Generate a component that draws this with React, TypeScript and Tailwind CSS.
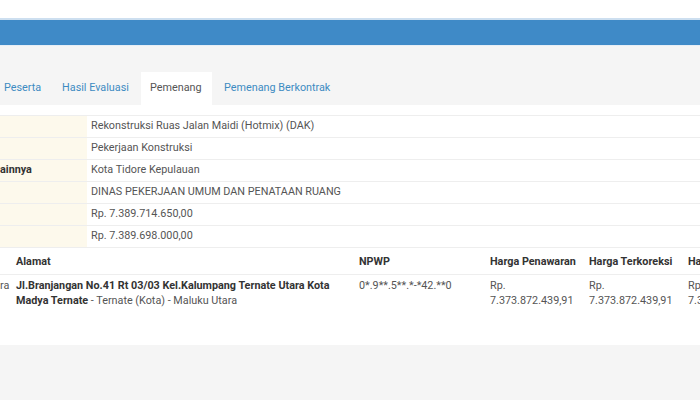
import React from "react";

const infoRows: { label: string; value: string }[] = [
  { label: "", value: "Rekonstruksi Ruas Jalan Maidi (Hotmix) (DAK)" },
  { label: "", value: "Pekerjaan Konstruksi" },
  { label: "ainnya", value: "Kota Tidore Kepulauan" },
  { label: "", value: "DINAS PEKERJAAN UMUM DAN PENATAAN RUANG" },
  { label: "", value: "Rp. 7.389.714.650,00" },
  { label: "", value: "Rp. 7.389.698.000,00" },
];

export default function App() {
  return (
    <div
      className="w-[700px] h-[400px] overflow-hidden bg-[#f5f5f5] text-[10.8px] text-[#444]"
      style={{ fontFamily: "Roboto, 'Liberation Sans', sans-serif" }}
    >
      <div className="h-[18px] bg-white" />
      <div className="h-[2px] bg-[#cddff0]" />
      <div className="h-[25px] bg-[#3f8ac7]" />
      <div className="h-[1px] bg-[#e6eef6]" />
      {/* tabs */}
      <div className="h-[26px]" />
      <div className="flex h-[33px] items-stretch pl-[4px] whitespace-nowrap">
        <div className="flex items-center mr-[21px] text-[#3d8bc2]">Peserta</div>
        <div className="flex items-center w-[79px] text-[#3d8bc2]">Hasil Evaluasi</div>
        <div className="flex items-center w-[71px] pl-[9px] bg-white text-[#555]">Pemenang</div>
        <div className="flex items-center ml-[12px] text-[#3d8bc2]">Pemenang Berkontrak</div>
      </div>
      {/* panel */}
      <div className="bg-white pt-[10px] h-[240px]">
        <div className="border-t border-[#eeeeee]">
          {infoRows.map((r, i) => (
            <div key={i} className="flex h-[22px] border-b border-[#eeeeee]">
              <div className="w-[87px] bg-[#fdf9ec] flex items-center font-bold text-[#333]">{r.label}</div>
              <div className="flex-1 flex items-center pl-[4px] text-[#555]">{r.value}</div>
            </div>
          ))}
        </div>
        <div className="flex h-[27px] pt-[2px] border-b border-[#eeeeee] font-bold text-[#333] items-center whitespace-nowrap overflow-hidden">
          <div className="w-[12px] shrink-0" />
          <div className="w-[343px] shrink-0 pl-[4px]">Alamat</div>
          <div className="w-[131px] shrink-0 pl-[4px]">NPWP</div>
          <div className="w-[99px] shrink-0 pl-[4px]">Harga Penawaran</div>
          <div className="w-[99px] shrink-0 pl-[4px]">Harga Terkoreksi</div>
          <div className="w-[99px] shrink-0 pl-[4px]">Harga Negosiasi</div>
        </div>
        <div className="flex pt-[3px] leading-[15px] text-[#555] overflow-hidden whitespace-nowrap">
          <div className="w-[12px] shrink-0 overflow-hidden">ra</div>
          <div className="w-[343px] shrink-0 pl-[4px] whitespace-normal">
            <span className="font-bold text-[#333]">
              Jl.Branjangan No.41 Rt 03/03 Kel.Kalumpang Ternate Utara Kota Madya Ternate
            </span>{" "}
            - Ternate (Kota) - Maluku Utara
          </div>
          <div className="w-[131px] shrink-0 pl-[4px]">0*.9**.5**.*-*42.**0</div>
          <div className="w-[99px] shrink-0 pl-[4px]">
            Rp.
            <br />
            7.373.872.439,91
          </div>
          <div className="w-[99px] shrink-0 pl-[4px]">
            Rp.
            <br />
            7.373.872.439,91
          </div>
          <div className="w-[99px] shrink-0 pl-[4px]">
            Rp.
            <br />
            7.373.872.439,91
          </div>
        </div>
      </div>
    </div>
  );
}
